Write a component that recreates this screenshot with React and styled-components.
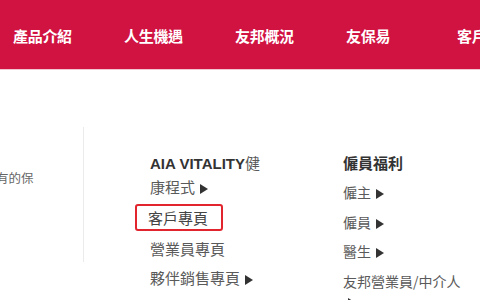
import React from 'react'
import styled, { createGlobalStyle } from 'styled-components'

const navItems = ['產品介紹', '人生機遇', '友邦概況', '友保易', '客戶專頁']

const partnerLinks = [
    { label: '營業員專頁' },
    { label: '夥伴銷售專頁', arrow: true },
]

const benefitLinks = [
    { label: '僱主', arrow: true },
    { label: '僱員', arrow: true },
    { label: '醫生', arrow: true },
    { label: '友邦營業員/中介人', arrow: true },
]

function App() {
    return (
        <Page>
            <GlobalStyle />
            <TopBar>
                {navItems.map((item) => (
                    <NavLink key={item}>{item}</NavLink>
                ))}
            </TopBar>
            <Menu>
                <Intro>
                    <p>有的保</p>
                </Intro>
                <Column $offset={66} $size={15} $pitch={23} $gap={6} $width={193}>
                    <Item $nowrap>
                        <Strong>AIA VITALITY</Strong>健<br />康程式<Arrow />
                    </Item>
                    <Highlight>客戶專頁</Highlight>
                    {partnerLinks.map(({ label, arrow }) => (
                        <Item key={label} $nowrap>
                            {label}
                            {arrow && <Arrow />}
                        </Item>
                    ))}
                </Column>
                <Column $offset={0} $size={14} $pitch={20} $gap={9.5} $width={122}>
                    <Heading>僱員福利</Heading>
                    {benefitLinks.map(({ label, arrow }) => (
                        <Item key={label}>
                            {label}
                            {arrow && <Arrow />}
                        </Item>
                    ))}
                </Column>
            </Menu>
        </Page>
    )
}

const GlobalStyle = createGlobalStyle`
    * {
        box-sizing: border-box;
    }
    body {
        margin: 0;
        background: #fff;
        font-family: "Noto Sans CJK TC", "Liberation Sans", sans-serif;
    }
`

const Page = styled.div`
    width: 480px;
    height: 300px;
    overflow: hidden;
    background: #fff;
`

const TopBar = styled.nav`
    height: 70px;
    background: #d11342;
    display: grid;
    grid-template-columns: repeat(5, 111px);
    align-items: center;
    padding: 2px 0 0 13px;
    border-bottom: 1px solid #f3c7d2;
    overflow: hidden;
`

const NavLink = styled.a`
    color: #fff;
    font-size: 15px;
    font-weight: 700;
    white-space: nowrap;
    letter-spacing: -0.3px;
`

const Menu = styled.div`
    display: flex;
    align-items: flex-start;
    padding-top: 57px;
`

const Intro = styled.div`
    width: 84px;
    height: 135px;
    flex-shrink: 0;
    border-right: 1px solid #ebebeb;
    overflow: hidden;
    p {
        margin: 41px 0 0 -4px;
        font-size: 12.5px;
        color: #666;
        white-space: nowrap;
    }
`

const Column = styled.div`
    display: flex;
    flex-direction: column;
    align-items: flex-start;
    flex-shrink: 0;
    gap: ${(p) => p.$gap}px;
    margin-left: ${(p) => p.$offset}px;
    padding-top: ${(p) => 24 - (p.$pitch - 23) / 2}px;
    width: ${(p) => p.$width}px;
    font-size: ${(p) => p.$size}px;
    line-height: ${(p) => p.$pitch}px;
    color: #5a5a5a;
`

const Item = styled.div`
    white-space: ${(p) => (p.$nowrap ? 'nowrap' : 'normal')};
`

const Heading = styled.div`
    color: #333;
    font-weight: 700;
    font-size: 15px;
`

const Strong = styled.span`
    font-family: "Liberation Sans", sans-serif;
    font-weight: 700;
    color: #333;
`

const Highlight = styled.div`
    margin-left: -15px;
    padding: 0 11px;
    border: 2px solid #e1242d;
    border-radius: 3px;
    line-height: 23px;
    color: #444;
    width: 88px;
    white-space: nowrap;
`

const Arrow = styled.span`
    display: inline-block;
    margin-left: 5px;
    width: 0;
    height: 0;
    border-left: 8px solid #333;
    border-top: 5px solid transparent;
    border-bottom: 5px solid transparent;
    vertical-align: -1px;
`

export default App
